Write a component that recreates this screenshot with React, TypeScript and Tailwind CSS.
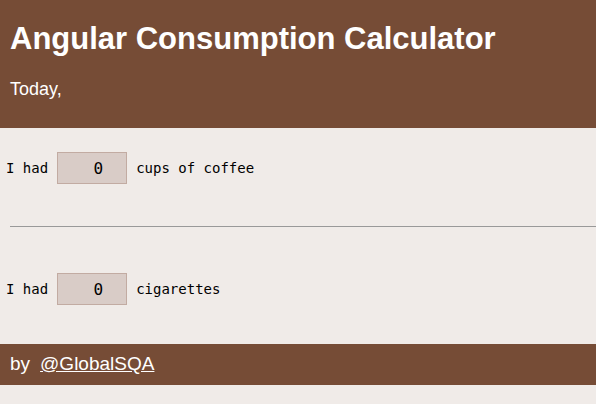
export default function App() {
  return (
    <div className="min-h-[404px] bg-[#f0ebe8]">
      <header className="h-[128px] bg-[#764c36] pl-[10px] pt-[20px] text-white [font-family:'Liberation_Sans',Arial,sans-serif]">
        <h1 className="text-[31px] font-bold leading-[37px]">Angular Consumption Calculator</h1>
        <p className="mt-[22px] text-[18px] leading-[21px]">Today,</p>
      </header>

      <div className="[font-family:'DejaVu_Sans_Mono',monospace] text-[14px] text-black">
        <Row label="cups of coffee" className="pt-[24px]" />
        <hr className="ml-[10px] mt-[42px] border-0 border-t border-t-[#999]" />
        <Row label="cigarettes" className="pt-[46px]" />
      </div>

      <footer className="mt-[39px] flex h-[41px] items-center gap-[10px] bg-[#764c36] pl-[10px] text-[19px] text-white [font-family:'Liberation_Sans',Arial,sans-serif]">
        <span>by</span>
        <a href="#" className="text-white underline">
          @GlobalSQA
        </a>
      </footer>
    </div>
  );
}

function Row({ label, className }: { label: string; className: string }) {
  return (
    <div className={`flex items-center pl-[6px] ${className}`}>
      <span>I had</span>
      <input
        type="text"
        defaultValue="0"
        className="ml-[9px] mr-[9px] h-[32px] w-[70px] border border-[#c2aba2] bg-[#d9ccc7] pr-[23px] text-right text-[16px] text-black outline-none [font-family:'DejaVu_Sans_Mono',monospace]"
      />
      <span>{label}</span>
    </div>
  );
}
